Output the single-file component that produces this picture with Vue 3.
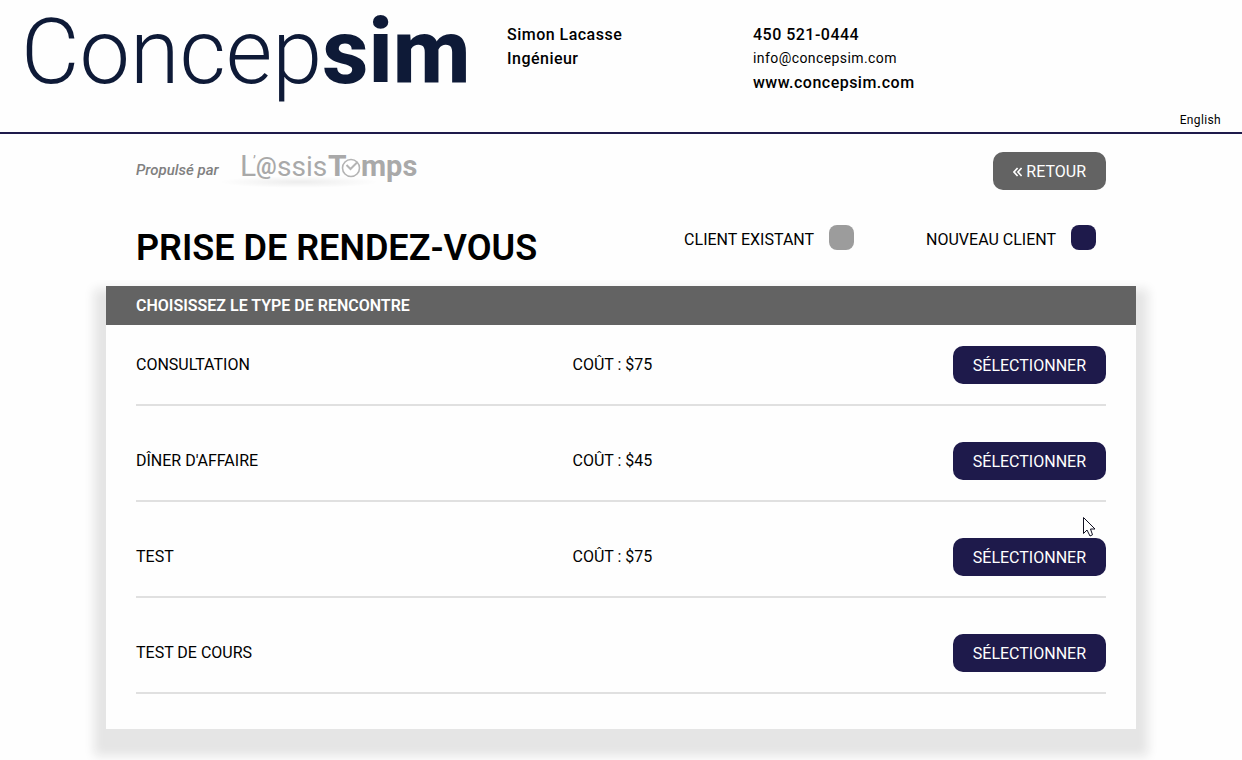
<script setup>
const meetings = [
  { name: "CONSULTATION", cost: "COÛT : $75" },
  { name: "DÎNER D'AFFAIRE", cost: "COÛT : $45" },
  { name: "TEST", cost: "COÛT : $75" },
  { name: "TEST DE COURS", cost: "" },
]
</script>

<template>
  <div class="page">
    <header class="top">
      <a class="logo" href="#" aria-label="Concepsim">Concep<b>sim</b></a>
      <div class="who">
        <div>Simon Lacasse</div>
        <div>Ingénieur</div>
      </div>
      <div class="contact">
        <div>450 521-0444</div>
        <a class="mail" href="#">info@concepsim.com</a>
        <a href="#">www.concepsim.com</a>
      </div>
      <a class="lang" href="#">English</a>
    </header>

    <main class="content">
      <div class="powered">
        <em>Propulsé par</em>
        <svg class="assist" width="210" height="44" viewBox="0 0 210 44" role="img" aria-label="L'@ssisTemps">
          <defs>
            <radialGradient id="glow">
              <stop offset="0" stop-color="#000" stop-opacity=".07" />
              <stop offset="1" stop-color="#000" stop-opacity="0" />
            </radialGradient>
          </defs>
          <ellipse cx="80" cy="33" rx="80" ry="6" fill="url(#glow)" />
          <g fill="#a9a9a9">
            <text x="21" y="27" class="tall">L</text>
            <text x="34" y="17" class="mark">’</text>
            <text x="37" y="25" class="at">@</text>
            <text x="58" y="27" class="low">ssis</text>
            <text x="109" y="27" class="tall thick">T</text>
            <text x="142" y="27" class="end thick">mps</text>
          </g>
          <circle cx="132" cy="19" r="8.5" fill="#fff" stroke="#b4b4b4" stroke-width="1.6" />
          <path d="M127.500 16L131.500 20L138.500 13" fill="none" stroke="#b4b4b4" stroke-width="2" />
        </svg>
        <button class="btn back" type="button">
          <svg width="9" height="10" viewBox="0 0 9 10" aria-hidden="true">
            <path d="M4.600 1L1 5L4.600 9M8.600 1L5 5L8.600 9" fill="none" stroke="#fff" stroke-width="1.7" />
          </svg>
          RETOUR
        </button>
      </div>

      <div class="heading">
        <h1>PRISE DE RENDEZ-VOUS</h1>
        <div class="choices">
          <label>CLIENT EXISTANT<input type="radio" name="client" value="existing"></label>
          <label>NOUVEAU CLIENT<input type="radio" name="client" value="new" checked></label>
        </div>
      </div>

      <section class="card">
        <h2>CHOISISSEZ LE TYPE DE RENCONTRE</h2>
        <ul>
          <li v-for="m in meetings" :key="m.name">
            <span>{{ m.name }}</span>
            <span>{{ m.cost }}</span>
            <button class="btn" type="button">SÉLECTIONNER</button>
          </li>
        </ul>
      </section>
    </main>

    <svg class="pointer" width="14" height="22" viewBox="0 0 14 22" aria-hidden="true">
      <path d="M.5 1.500V17.500L4 14L7 20L9.500 18.800L7.500 13H12Z" fill="#fff" stroke="#111122" stroke-width="1" />
    </svg>
  </div>
</template>

<style>
body {
  margin: 0;
  background: #fefefe;
}
</style>

<style scoped>
.page {
  position: relative;
  box-sizing: border-box;
  min-height: 100vh;
  padding-bottom: 31px;
  font: 400 16px/24px Roboto, "Liberation Sans", sans-serif;
  color: #000;
}
a {
  color: inherit;
  text-decoration: none;
}
.top {
  display: grid;
  grid-template-columns: 486px 246px 1fr auto;
  box-sizing: border-box;
  height: 134px;
  padding: 0 21px;
  border-bottom: 2px solid #1e1a4b;
  font-weight: 460;
}
.who,
.contact > *,
.lang {
  letter-spacing: 0.03em;
}
.logo {
  font-size: 90px;
  line-height: 106px;
  font-weight: 340;
  color: #0e1a37;
}
.logo b {
  font-weight: 800;
}
.who,
.contact {
  padding-top: 23px;
}
.contact a {
  display: block;
}
.contact .mail {
  padding-bottom: 1px;
  font-size: 14px;
  line-height: 23px;
  font-weight: 400;
}
.lang {
  align-self: end;
  font-size: 12px;
  font-weight: 400;
}
.content {
  max-width: 1030px;
  margin: 0 auto;
}
.powered,
.heading {
  display: flex;
  align-items: center;
  padding: 0 30px;
}
.powered {
  padding-top: 15px;
}
.powered em {
  padding-bottom: 2px;
  font-size: 15px;
  font-weight: 460;
  color: #808080;
}
.tall {
  font-size: 30px;
}
.mark {
  font-size: 14px;
}
.at {
  font-size: 23px;
  font-weight: 600;
}
.low {
  font-size: 28px;
  font-weight: 440;
}
.end {
  font-size: 29px;
}
.thick {
  font-weight: 700;
}
.btn {
  height: 38px;
  padding: 2px 20px 0;
  border: 0;
  border-radius: 10px;
  background: #1e1a4b;
  color: #fff;
  font: inherit;
}
.back {
  margin-left: auto;
  background: #636363;
}
.heading {
  align-items: flex-start;
  justify-content: space-between;
  padding-right: 40px;
  padding-top: 32px;
}
h1 {
  margin: 0;
  font-size: 36px;
  line-height: 46px;
  font-weight: 640;
}
.choices {
  display: flex;
  gap: 72px;
}
.choices label {
  display: flex;
  gap: 15px;
  line-height: 30px;
}
.choices input {
  appearance: none;
  width: 25px;
  height: 25px;
  margin: 0;
  border-radius: 8px;
  background: #9c9c9c;
}
.choices input:checked {
  background: #1e1a4b;
}
.card {
  margin-top: 15px;
  padding-bottom: 20px;
  background: #fefefe;
  box-shadow: 0 15px 10px 12px #e5e5e5;
}
h2 {
  margin: 0;
  padding: 0 30px;
  background: #636363;
  color: #fff;
  font-size: 16px;
  line-height: 39px;
  font-weight: 600;
}
ul {
  margin: 0;
  padding: 0 30px;
  list-style: none;
}
li {
  display: grid;
  grid-template-columns: 45% 1fr auto;
  align-items: center;
  margin-bottom: 15px;
  padding: 21px 0 20px;
  border-bottom: 2px solid #e0e0e0;
}
.pointer {
  position: absolute;
  left: 1083px;
  top: 516px;
}
</style>
